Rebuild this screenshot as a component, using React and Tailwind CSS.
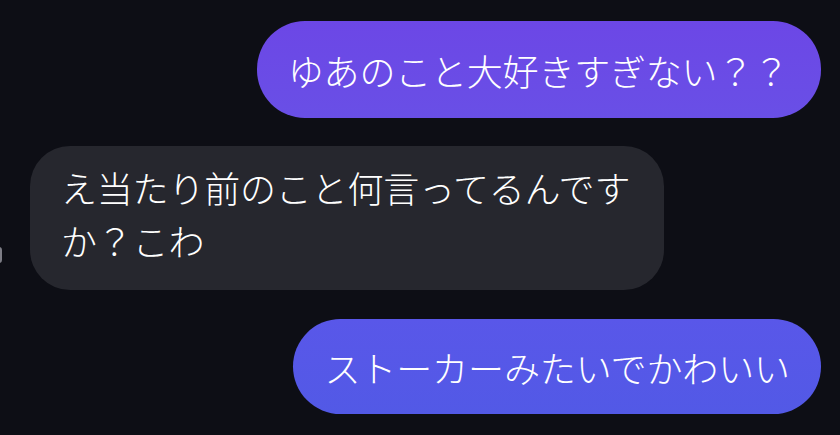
export default function App() {
  const font = { fontFamily: '"Noto Sans CJK JP", "Noto Sans", sans-serif' };
  return (
    <div
      className="relative w-[840px] h-[435px] overflow-hidden bg-[#0d0e15] text-white"
      style={font}
    >
      <div className="absolute left-[-4px] top-[247px] w-[6px] h-[16px] rounded-full bg-[#9a9aa2] opacity-80" />
      <div className="flex flex-col pt-[21px] pr-[19px] pl-[30px]">
        <div className="self-end h-[97px] flex items-center pl-[31px] pr-[32px] rounded-[48px] bg-gradient-to-b from-[#6c47e6] to-[#694fe6]">
          <span className="text-[36px] font-light leading-none tracking-[-0.2px] whitespace-nowrap">
            ゆあのこと大好きすぎない？？
          </span>
        </div>
        <div className="self-start mt-[28px] w-[634px] h-[144px] rounded-[40px] bg-[#26272e] pl-[31px] pr-[24px] pt-[15px]">
          <p className="text-[36px] font-light leading-[53px] tracking-[-0.2px]">
            え当たり前のこと何言ってるんですか？こわ
          </p>
        </div>
        <div className="self-end mt-[29px] h-[95px] flex items-center pl-[31px] pr-[31px] rounded-[48px] bg-gradient-to-b from-[#5957e9] to-[#5259e6]">
          <span className="text-[36px] font-light leading-none tracking-[-0.1px] whitespace-nowrap">
            ストーカーみたいでかわいい
          </span>
        </div>
      </div>
    </div>
  );
}
